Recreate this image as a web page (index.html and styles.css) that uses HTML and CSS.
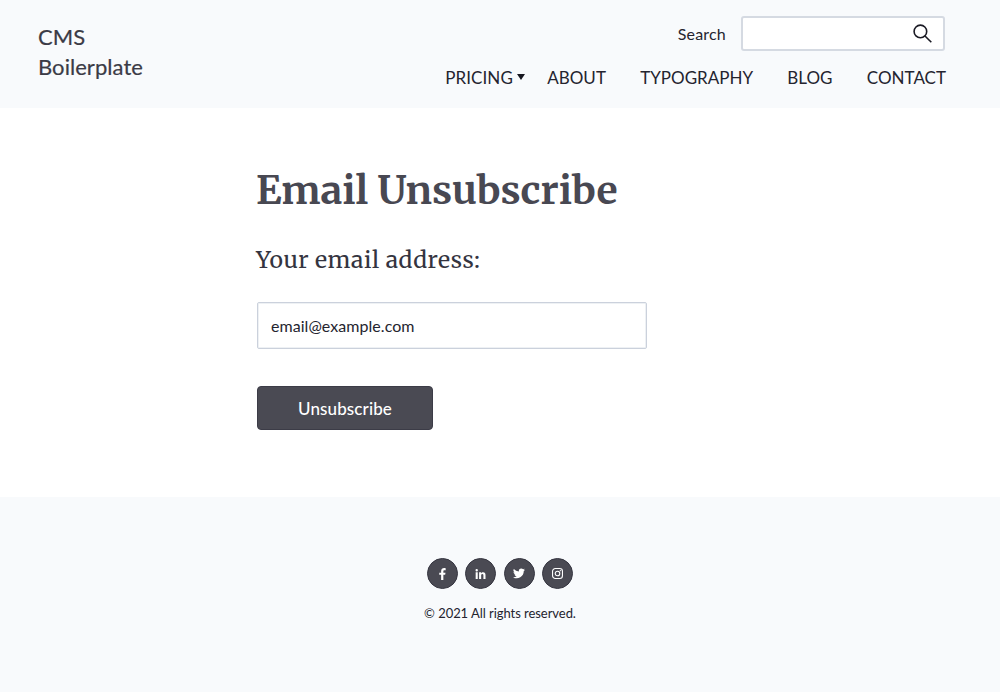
FILE: index.html
```html
<!DOCTYPE html>
<html lang="en">
<head>
<meta charset="utf-8">
<title>Email Unsubscribe</title>
<link rel="stylesheet" href="styles.css">
</head>
<body>
<header class="header">
  <a class="logo">CMS<br>Boilerplate</a>
  <div class="header-right">
    <form class="search">
      <label class="search-label" for="q">Search</label>
      <div class="search-box">
        <input class="search-input" id="q" type="text">
        <svg class="search-icon" viewBox="0 0 20 20"><circle cx="7.4" cy="7.4" r="6.3"/><path d="M12 12l6.3 6.3"/></svg>
      </div>
    </form>
    <nav class="nav">
      <a class="nav-link nav-pricing"><span>PRICING</span><svg class="caret" viewBox="0 0 8 6"><path d="M0 0h8L4 6z"/></svg></a>
      <a class="nav-link"><span>ABOUT</span></a>
      <a class="nav-link"><span>TYPOGRAPHY</span></a>
      <a class="nav-link"><span>BLOG</span></a>
      <a class="nav-link"><span>CONTACT</span></a>
    </nav>
  </div>
</header>
<main class="main">
  <h1 class="title">Email Unsubscribe</h1>
  <h2 class="subtitle">Your email address:</h2>
  <div class="email">email@example.com</div>
  <button class="button" type="button">Unsubscribe</button>
</main>
<footer class="footer">
  <div class="social">
    <a class="social-link"><svg class="facebook" viewBox="0 0 8 14"><path d="M5 14V8h2.1l.4-2.5H5V4c0-.8.3-1.4 1.4-1.4h1.3V.3C7.2.2 6.6.1 6 .1 3.900.1 2.400 1.300 2.400 3.700v1.800H.2V8h2.200v6z"/></svg></a>
    <a class="social-link"><svg class="linkedin" viewBox="0 0 12 12"><path d="M.2 4h2.500v8H.2zM1.450 0a1.450 1.450 0 1 1 0 2.900 1.450 1.450 0 0 1 0-2.900zM4.300 4h2.400v1.100C7.100 4.300 8 3.800 9.100 3.800c2.400 0 2.900 1.600 2.900 3.700V12H9.500V8c0-1 0-2.100-1.300-2.100S6.800 6.900 6.800 7.900V12H4.300z"/></svg></a>
    <a class="social-link"><svg class="twitter" viewBox="0 0 24 20"><path d="M24 2.400a10 10 0 0 1-2.800.8A5 5 0 0 0 23.300.4a10 10 0 0 1-3.100 1.200A4.900 4.900 0 0 0 11.800 6 14 14 0 0 1 1.700.9a4.900 4.900 0 0 0 1.500 6.600A5 5 0 0 1 1 6.900c0 2.300 1.600 4.400 3.900 4.900a5 5 0 0 1-2.200.1 4.900 4.900 0 0 0 4.600 3.400A9.900 9.900 0 0 1 0 17.300a14 14 0 0 0 21.500-12.400A10 10 0 0 0 24 2.400z"/></svg></a>
    <a class="social-link"><svg class="instagram" viewBox="0 0 12 12"><rect x=".6" y=".6" width="10.8" height="10.8" rx="3"/><circle cx="6" cy="6" r="2.500"/><circle class="dot" cx="9.100" cy="2.900" r=".7"/></svg></a>
  </div>
  <p class="copyright">© 2021 All rights reserved.</p>
</footer>
</body>
</html>
```
FILE: styles.css
```css
* { box-sizing: border-box; }
body {
  margin: 0;
  background: #fff;
  color: #24242f;
  font-family: Lato, "Liberation Sans", sans-serif;
  font-size: 16px;
}
.header {
  display: flex;
  justify-content: space-between;
  height: 108px;
  padding: 16px 54px 0 38px;
  background: #f8fafc;
}
.logo {
  padding-top: 6px;
  color: #3b3b46;
  font-size: 22px;
  line-height: 30px;
  letter-spacing: 0.05px;
  -webkit-text-stroke: 0.2px #3b3b46;
}
.header-right {
  display: flex;
  flex-direction: column;
  align-items: flex-end;
}
.search {
  display: flex;
  align-items: center;
  gap: 15px;
  padding-right: 1px;
}
.search-label { font-size: 16px; line-height: 20px; letter-spacing: 0.2px; }
.search-box {
  display: flex;
  align-items: center;
  justify-content: flex-end;
  width: 204px;
  height: 35px;
  padding-right: 10px;
  border: 2px solid #d5dae2;
  border-radius: 3px;
  background: #fff;
}
.search-input {
  flex: 1;
  min-width: 0;
  border: 0;
  outline: 0;
  background: transparent;
}
.search-icon {
  width: 20px;
  height: 20px;
  fill: none;
  stroke: #1a1a24;
  stroke-width: 1.6;
}
.nav { display: flex; margin-top: 16px; gap: 34.3px; }
.nav-link {
  display: flex;
  align-items: center;
  font-size: 17px;
  line-height: 22px;
  white-space: nowrap;
}
.nav-pricing { gap: 4px; margin-right: -12px; letter-spacing: 0.1px; }
.caret { width: 8px; height: 6px; margin-top: -2px; fill: #16161f; }
.main { height: 389px; padding: 58px 0 0 256px; }
.title, .subtitle {
  margin: 0;
  font-family: Merriweather, "DejaVu Serif Condensed", serif;
}
.title {
  color: #484852;
  font-size: 39px;
  font-weight: 700;
  line-height: 50px;
}
.subtitle {
  margin-top: 28px;
  color: #343440;
  font-size: 23px;
  font-weight: 400;
  line-height: 32px;
  letter-spacing: 0.55px;
}
.email {
  display: flex;
  align-items: center;
  width: 390px;
  height: 47px;
  margin: 26px 0 0 1px;
  padding: 0 13px;
  border: 1px solid #cbd1dc;
  border-radius: 2px;
  box-shadow: inset 0 0 0 1px #eef1f4;
  letter-spacing: 0.05px;
}
.button {
  display: block;
  width: 176px;
  height: 44px;
  margin: 37px 0 0 1px;
  padding: 0;
  border: 1px solid #3c3c47;
  border-radius: 4px;
  background: #4a4a53;
  color: #fff;
  font: 500 17px Lato, "Liberation Sans", sans-serif;
  letter-spacing: 0.1px;
}
.footer {
  display: flex;
  flex-direction: column;
  align-items: center;
  height: 195px;
  padding-top: 61px;
  background: #f8fafc;
}
.social { display: flex; gap: 7.500px; }
.social-link {
  display: flex;
  align-items: center;
  justify-content: center;
  width: 31px;
  height: 31px;
  border: 1px solid #363641;
  border-radius: 50%;
  background: #4a4a53;
  fill: #fff;
}
.facebook { width: 7px; height: 12px; }
.linkedin { width: 11px; height: 10px; }
.twitter { width: 12px; height: 11px; }
.instagram { width: 11px; height: 11px; fill: none; stroke: #fff; stroke-width: 1.200; }
.dot { fill: #fff; stroke: none; }
.copyright { margin: 16px 0 0; font-size: 13px; line-height: 16px; letter-spacing: -0.05px; }
```
